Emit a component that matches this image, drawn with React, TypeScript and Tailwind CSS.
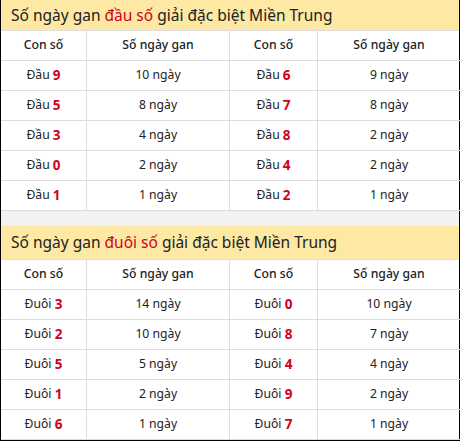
import React from 'react';

interface Row {
  a: string;
  aDays: number;
  b: string;
  bDays: number;
}

const dauRows: Row[] = [
  { a: '9', aDays: 10, b: '6', bDays: 9 },
  { a: '5', aDays: 8, b: '7', bDays: 8 },
  { a: '3', aDays: 4, b: '8', bDays: 2 },
  { a: '0', aDays: 2, b: '4', bDays: 2 },
  { a: '1', aDays: 1, b: '2', bDays: 1 },
];

const duoiRows: Row[] = [
  { a: '3', aDays: 14, b: '0', bDays: 10 },
  { a: '2', aDays: 10, b: '8', bDays: 7 },
  { a: '5', aDays: 5, b: '4', bDays: 4 },
  { a: '1', aDays: 2, b: '9', bDays: 2 },
  { a: '6', aDays: 1, b: '7', bDays: 1 },
];

const cols = 'grid grid-cols-[86px_143px_88px_142px]';
const cell = 'h-[30px] flex items-center justify-center border-b border-[#dddddd]';

const GanTable: React.FC<{ label: string; prefix: string; rows: Row[]; titleClass: string }> = ({
  label,
  prefix,
  rows,
  titleClass,
}) => (
  <div>
    <div className={`bg-[#fde8a4] border-b border-[#dddddd] flex items-center pl-[10px] text-[15.5px] text-[#222222] ${titleClass}`}>
      <span>
        Số ngày gan <span className="text-[#d0021b]">{label}</span> giải đặc biệt Miền Trung
      </span>
    </div>
    <div className={`${cols} text-[12.2px] text-[#222222]`}>
      <div className={`${cell} border-r font-medium`}>Con số</div>
      <div className={`${cell} border-r font-medium`}>Số ngày gan</div>
      <div className={`${cell} border-r font-medium`}>Con số</div>
      <div className={`${cell} font-medium`}>Số ngày gan</div>
      {rows.map((r, i) => (
        <React.Fragment key={i}>
          <div className={`${cell} border-r`}>
            {prefix}&nbsp;<b className="text-[#d0021b] text-[13.5px]">{r.a}</b>
          </div>
          <div className={`${cell} border-r`}>{r.aDays} ngày</div>
          <div className={`${cell} border-r`}>
            {prefix}&nbsp;<b className="text-[#d0021b] text-[13.5px]">{r.b}</b>
          </div>
          <div className={cell}>{r.bDays} ngày</div>
        </React.Fragment>
      ))}
    </div>
  </div>
);

export default function App() {
  return (
    <div className="w-[460px] bg-white border-l border-r border-b border-black" style={{ fontFamily: '"Noto Sans", "Open Sans", sans-serif' }}>
      <GanTable label="đầu số" prefix="Đầu" rows={dauRows} titleClass="h-[31px] pt-[1px]" />
      <div className="h-[15px] bg-[#f2f2f2]" />
      <GanTable label="đuôi số" prefix="Đuôi" rows={duoiRows} titleClass="h-[34px]" />
    </div>
  );
}
